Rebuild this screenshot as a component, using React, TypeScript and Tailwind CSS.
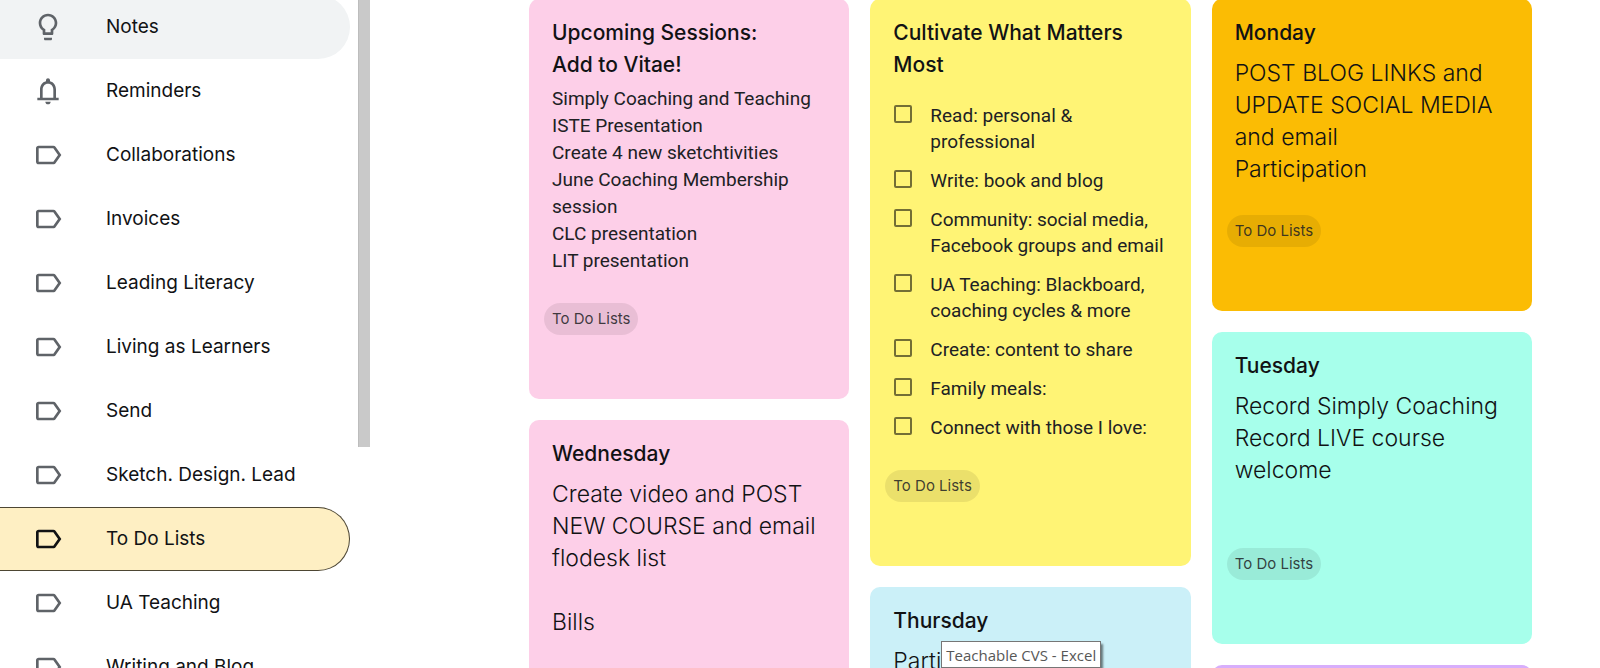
import React from 'react';
import clsx from 'clsx';

const ICONS = {
  bulb: 'M9 21c0 .5.4 1 1 1h4c.6 0 1-.5 1-1v-1H9v1zm3-19C8.1 2 5 5.1 5 9c0 2.4 1.2 4.5 3 5.7V17c0 .5.4 1 1 1h6c.6 0 1-.5 1-1v-2.3c1.8-1.3 3-3.4 3-5.7 0-3.9-3.1-7-7-7zm2.9 11.1l-.9.6V16h-4v-2.3l-.9-.6C7.8 12.2 7 10.6 7 9c0-2.8 2.2-5 5-5s5 2.2 5 5c0 1.6-.8 3.2-2.1 4.1z',
  bell: 'M18 17v-6c0-3.07-1.63-5.64-4.5-6.32V4c0-.83-.67-1.5-1.5-1.5s-1.5.67-1.5 1.5v.68C7.64 5.36 6 7.92 6 11v6H4v2h16v-2h-2zm-2 0H8v-6c0-2.48 1.51-4.5 4-4.5s4 2.02 4 4.5v6zm-4 5c1.1 0 2-.9 2-2h-4c0 1.1.9 2 2 2z',
  label: 'M17.63 5.84C17.27 5.33 16.67 5 16 5L5 5.01C3.9 5.01 3 5.9 3 7v10c0 1.1.9 1.99 2 1.99L16 19c.67 0 1.27-.33 1.63-.84L22 12l-4.37-6.16zM16 17H5V7h11l3.55 5L16 17z',
};

type IconName = keyof typeof ICONS;

const navItems: { name: string; icon: IconName }[] = [
  { name: 'Notes', icon: 'bulb' },
  { name: 'Reminders', icon: 'bell' },
  { name: 'Collaborations', icon: 'label' },
  { name: 'Invoices', icon: 'label' },
  { name: 'Leading Literacy', icon: 'label' },
  { name: 'Living as Learners', icon: 'label' },
  { name: 'Send', icon: 'label' },
  { name: 'Sketch. Design. Lead', icon: 'label' },
  { name: 'To Do Lists', icon: 'label' },
  { name: 'UA Teaching', icon: 'label' },
  { name: 'Writing and Blog', icon: 'label' },
];

const goals = [
  'Read: personal & professional',
  'Write: book and blog',
  'Community: social media, Facebook groups and email',
  'UA Teaching: Blackboard, coaching cycles & more',
  'Create: content to share',
  'Family meals:',
  'Connect with those I love:',
];

const sessions = [
  'Simply Coaching and Teaching',
  'ISTE Presentation',
  'Create 4 new sketchtivities',
  'June Coaching Membership session',
  'CLC presentation',
  'LIT presentation',
];

const Sidebar = () => (
  <aside className="flex w-[371px] shrink-0 items-start justify-between">
    <nav className="-mt-[5px] w-[350px]">
      {navItems.map(({ name, icon }) => {
        const active = name === 'To Do Lists';
        return (
          <a
            key={name}
            href="#"
            className={clsx(
              'flex h-16 items-center gap-[42px] rounded-r-full border border-l-0 pl-8 text-[19px] text-[#111214]',
              active ? 'border-[#4d4633] bg-[#feefc3]' : 'border-transparent',
              name === 'Notes' && 'bg-[#f1f3f4]'
            )}
          >
            <svg viewBox="0 0 24 24" className={clsx('size-8', active ? 'fill-[#111214]' : 'fill-[#5f6368]')}>
              <path d={ICONS[icon]} />
            </svg>
            <span>{name}</span>
          </a>
        );
      })}
    </nav>
    <div className="mr-px h-[447px] w-3 border-l border-[#bdbdbd] bg-[#c9c9c9]" />
  </aside>
);

interface NoteProps {
  title?: string;
  color: string;
  className?: string;
  children?: React.ReactNode;
}

const Note = ({ title, color, className, children }: NoteProps) => (
  <article className={clsx('relative rounded-[10px] px-[23px] pt-[18px] pb-16', color, className)}>
    <h2 className="text-[21px] leading-8 font-medium text-[#111214]">{title}</h2>
    {children}
  </article>
);

const Body = ({ children }: { children: React.ReactNode }) => (
  <p className="mt-2 text-[23px] leading-8 font-light whitespace-pre-line text-[#111214]">{children}</p>
);

const Tag = ({ className }: { className: string }) => (
  <button
    type="button"
    className={clsx('-ml-2 block h-8 rounded-full bg-black/8 px-2 text-[15px] text-[#202124]/85', className)}
  >
    To Do Lists
  </button>
);

const App = () => {
  return (
    <div className="flex h-screen items-start overflow-hidden bg-white font-['Inter',sans-serif]">
      <Sidebar />
      <main className="-mt-px grid flex-1 grid-cols-3 items-start gap-[21px] pr-[68px] pl-[158px]">
        <div className="flex flex-col gap-[21px]">
          <Note title="Upcoming Sessions: Add to Vitae!" color="bg-[#fdcfe8]" className="[&>h2]:pr-12">
            <div className="mt-1 font-['Roboto',sans-serif] text-[19px] leading-[27px] text-[#202124]">
              {sessions.map((line) => (
                <p key={line}>{line}</p>
              ))}
            </div>
            <Tag className="mt-[29px]" />
          </Note>
          <Note title="Wednesday" color="bg-[#fdcfe8]">
            <Body>{'Create video and POST NEW COURSE and email flodesk list\n\nBills'}</Body>
            <Tag className="mt-[30px]" />
          </Note>
        </div>

        <div className="flex flex-col gap-[21px]">
          <Note title="Cultivate What Matters Most" color="bg-[#fff475]">
            <ul className="mt-[22px] flex flex-col gap-[13px] font-['Roboto',sans-serif] text-[19px] leading-[26px] text-[#202124]">
              {goals.map((goal) => (
                <li key={goal}>
                  <label className="-mr-2 flex items-start gap-[18px] pl-px">
                    <input
                      type="checkbox"
                      className="mt-[2px] size-[18px] shrink-0 appearance-none rounded-[2px] border-2 border-black/55"
                    />
                    <span>{goal}</span>
                  </label>
                </li>
              ))}
            </ul>
            <Tag className="mt-[29px]" />
          </Note>
          <Note title="Thursday" color="bg-[#cbf0f8]">
            <Body>Participation</Body>
            <div
              role="tooltip"
              className="absolute top-[54px] left-[71px] h-[27px] border border-[#767676] bg-white px-1 font-['Open_Sans',sans-serif] text-[15px] leading-[26px] whitespace-nowrap text-[#575757] shadow-[2px_3px_2px_rgba(0,0,0,0.5)]"
            >
              Teachable CVS - Excel
            </div>
          </Note>
        </div>

        <div className="flex flex-col gap-[21px]">
          <Note title="Monday" color="bg-[#fbbc04]">
            <Body>{'POST BLOG LINKS and UPDATE SOCIAL MEDIA and email\nParticipation'}</Body>
            <Tag className="mt-[30px]" />
          </Note>
          <Note title="Tuesday" color="bg-[#a7ffeb]">
            <Body>{'Record Simply Coaching\nRecord LIVE course welcome\n\u00a0'}</Body>
            <Tag className="mt-[30px]" />
          </Note>
          <Note color="bg-[#d7aefb]" />
        </div>
      </main>
    </div>
  );
};

export default App;
